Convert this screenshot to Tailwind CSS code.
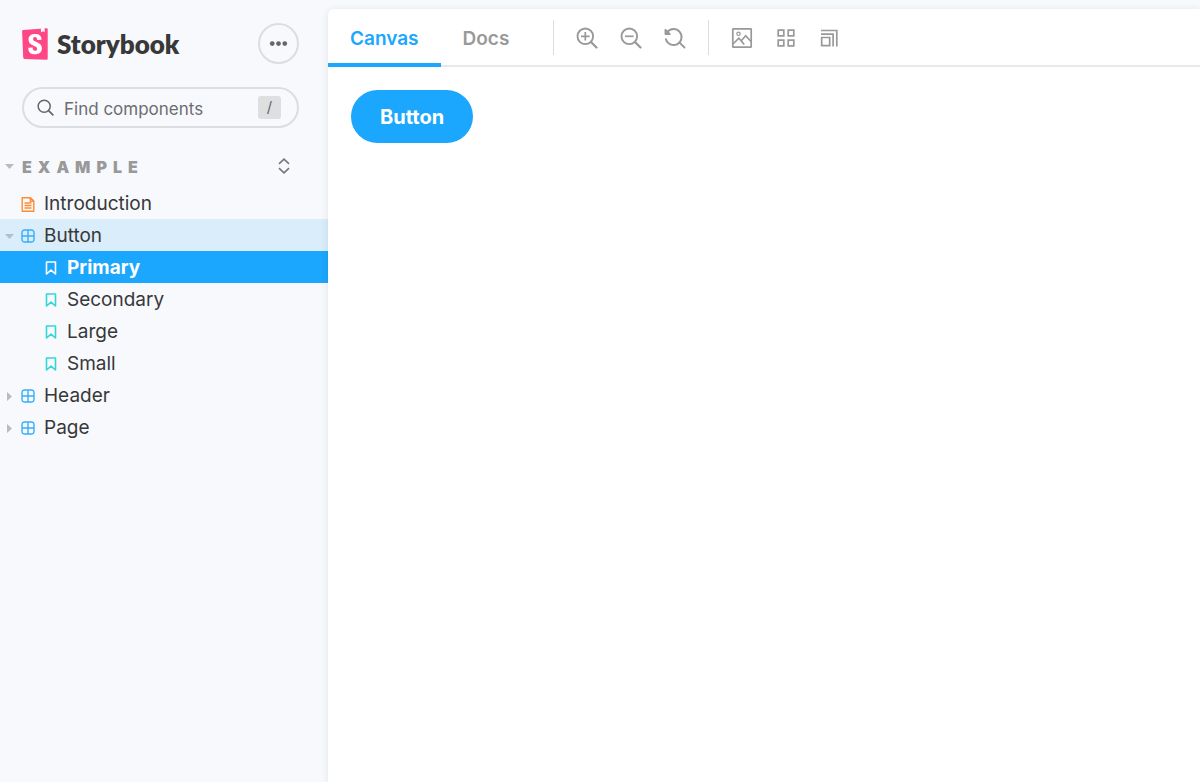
<!DOCTYPE html>
<html lang="en">
<head>
<meta charset="utf-8">
<meta name="viewport" content="width=device-width, initial-scale=1">
<title>Button - Primary · Storybook</title>
<script src="https://cdn.jsdelivr.net/npm/@tailwindcss/browser@4"></script>
</head>
<body class="flex min-h-screen bg-[#f7f9fd] font-['Inter',sans-serif] text-[#383838]">
<svg class="hidden" aria-hidden="true">
  <symbol id="component" viewBox="0 0 14 14"><path d="M3.500 1h7A2.500 2.500 0 0 1 13 3.500v7a2.500 2.500 0 0 1-2.500 2.500h-7A2.500 2.500 0 0 1 1 10.500v-7A2.500 2.500 0 0 1 3.500 1zM7 1v12M1 7h12" fill="none" stroke="currentColor" stroke-width="1.400"/></symbol>
  <symbol id="bookmark" viewBox="0 0 12 14"><path d="M1.500 1h9v12L6 9.200 1.500 13z" fill="none" stroke="currentColor" stroke-width="1.600" stroke-linejoin="round"/></symbol>
  <symbol id="lens" viewBox="0 0 22 22"><circle cx="9.300" cy="9.300" r="7.800" fill="none" stroke="currentColor" stroke-width="1.900"/><path d="M15 15l5.500 5.500" stroke="currentColor" stroke-width="2.200" stroke-linecap="round"/></symbol>
</svg>

<aside class="w-[328px] shrink-0">
  <header class="flex items-center justify-between pt-[23px] pr-[29px] pl-[22px]">
    <a href="#" class="flex items-center gap-2" aria-label="Storybook">
      <svg class="h-8 w-[26px]" viewBox="0 0 26 32" aria-hidden="true">
        <path d="M1.300 2.100L24.500.3a1.100 1.100 0 0 1 1.200 1.100v29.200a1.200 1.200 0 0 1-1.300 1.200L2.500 30.900a1.400 1.400 0 0 1-1.300-1.300L.1 3.500a1.300 1.300 0 0 1 1.200-1.400z" fill="#ff4785"/>
        <path d="M18.900.3l3.600-.3.200 4.300-1.700-1.100-2 1z" fill="#fff"/>
        <path d="M19.500 11.800l-4.400.2c0-2-.7-2.900-2-2.900s-2 .7-2 1.800c0 1.500.9 2 3.500 3.100 3.500 1.500 5.300 3 5.300 6.300 0 3.900-2.600 6-6.900 6-4.500 0-6.900-2.300-6.700-6.600l4.400-.1c0 2.300.8 3.200 2.300 3.200 1.300 0 2.100-.7 2.100-1.900 0-1.500-.9-2.100-3.500-3.100-3.500-1.400-5.100-3.200-5.100-6.200 0-3.700 2.500-5.700 6.700-5.700s6.400 2 6.300 5.900z" fill="#fff"/>
      </svg>
      <span class="pl-px font-['Lato',sans-serif] text-[26px] leading-8 font-extrabold">Storybook</span>
    </a>
    <button type="button" aria-label="Shortcuts" class="flex size-[41px] items-center justify-center rounded-full border-2 border-[#dbdde0] text-[#666]">
      <svg class="h-[19px] w-[19px]" viewBox="0 0 20 20" fill="currentColor"><circle cx="3.400" cy="10" r="2.500"/><circle cx="10" cy="10" r="2.500"/><circle cx="16.600" cy="10" r="2.500"/></svg>
    </button>
  </header>

  <div class="mt-[23px] mr-[29px] ml-[22px] flex h-[41px] items-center rounded-full border-2 border-[#dbdde0] pr-4 pl-[13px]">
    <svg class="size-[17px] shrink-0 text-[#666]"><use href="#lens"/></svg>
    <input type="text" aria-label="Find components" placeholder="Find components" class="ml-2.5 min-w-0 flex-1 bg-transparent pt-1 text-[17px] outline-none placeholder:text-[#6b6d70]">
    <kbd class="flex h-[23px] w-[23px] items-center justify-center rounded-[3px] bg-[#dedfe1] font-['Inter',sans-serif] text-[15px] text-[#666]">/</kbd>
  </div>

  <div class="mt-[22px] flex h-8 items-center justify-between pr-[38px]">
    <button type="button" class="flex items-center pt-0.5 pl-[5px] text-[16px] font-black tracking-[6px] text-[#999]">
      <svg class="mr-2 mb-0.5 h-[5px] w-[9px] text-[#bbb]" viewBox="0 0 9 5"><path d="M0 0h9L4.500 5z" fill="currentColor"/></svg>EXAMPLE
    </button>
    <button type="button" aria-label="Expand all" class="text-[#777]">
      <svg class="h-4 w-3" viewBox="0 0 12 16" fill="none" stroke="currentColor" stroke-width="1.600"><path d="M1 5.800l5-4.600 5 4.600M1 10.200l5 4.600 5-4.600"/></svg>
    </button>
  </div>

  <nav class="mt-[5px] text-[19px] leading-8">
    <a href="#" class="flex h-8 items-center gap-2 pt-0.5 pl-[21px]">
      <svg class="h-[15px] w-3.5 text-[#ff8b33]" viewBox="0 0 14 15" fill="none" stroke="currentColor" stroke-width="1.400"><path d="M1.200.8h8.300l3.300 3.200v10.200H1.200zM9.300.8v3.400h3.500M3.500 6h7M3.500 8.500h7M3.500 11h7" stroke-linejoin="round"/></svg>
      <span class="pl-px">Introduction</span>
    </a>
    <a href="#" class="flex h-8 items-center gap-2 bg-[#daedfb] pt-0.5 pl-[5px]">
      <svg class="-mr-px h-[5px] w-[9px] text-[#b3bfc8]" viewBox="0 0 9 5"><path d="M0 0h9L4.500 5z" fill="currentColor"/></svg>
      <svg class="size-3.5 text-[#37aefa]"><use href="#component"/></svg>
      <span class="pl-px">Button</span>
    </a>
    <a href="#" class="flex h-8 items-center gap-2.5 bg-[#1ba7fd] pt-0.5 pl-[45px] font-bold text-white"><svg class="h-3.5 w-3"><use href="#bookmark"/></svg>Primary</a>
    <a href="#" class="flex h-8 items-center gap-2.5 pt-0.5 pl-[45px]"><svg class="h-3.5 w-3 text-[#37d5d3]"><use href="#bookmark"/></svg>Secondary</a>
    <a href="#" class="flex h-8 items-center gap-2.5 pt-0.5 pl-[45px]"><svg class="h-3.5 w-3 text-[#37d5d3]"><use href="#bookmark"/></svg>Large</a>
    <a href="#" class="flex h-8 items-center gap-2.5 pt-0.5 pl-[45px]"><svg class="h-3.5 w-3 text-[#37d5d3]"><use href="#bookmark"/></svg>Small</a>
    <a href="#" class="flex h-8 items-center gap-2 pt-0.5 pl-[7px]">
      <svg class="mr-px h-[9px] w-[5px] text-[#bbb]" viewBox="0 0 5 9"><path d="M0 0l5 4.500L0 9z" fill="currentColor"/></svg>
      <svg class="size-3.5 text-[#37aefa]"><use href="#component"/></svg>
      <span class="pl-px">Header</span>
    </a>
    <a href="#" class="flex h-8 items-center gap-2 pt-0.5 pl-[7px]">
      <svg class="mr-px h-[9px] w-[5px] text-[#bbb]" viewBox="0 0 5 9"><path d="M0 0l5 4.500L0 9z" fill="currentColor"/></svg>
      <svg class="size-3.5 text-[#37aefa]"><use href="#component"/></svg>
      <span class="pl-px">Page</span>
    </a>
  </nav>
</aside>

<main class="mt-[9px] min-w-0 flex-1 rounded-tl-md bg-white shadow-[0_1px_8px_rgba(0,0,0,0.09)]">
  <div class="flex h-[58px] items-stretch border-b-2 border-[#e9e9e9] text-[19px] font-semibold">
    <button type="button" class="-mb-0.5 border-b-4 border-[#1ba7fd] px-[22px] pt-1.5 text-[#1ba7fd]">Canvas</button>
    <button type="button" class="px-[22px] pt-1 text-[#999]">Docs</button>
    <div class="ml-[22px] flex items-center gap-[22px] text-[#999]">
      <span class="h-[35px] w-px bg-[#ddd]"></span>
      <button type="button" aria-label="Zoom in" class="pt-0.5"><svg class="size-[22px]" viewBox="0 0 22 22"><use href="#lens"/><path d="M5 9.300h8.600M9.300 5v8.600" stroke="currentColor" stroke-width="1.700"/></svg></button>
      <button type="button" aria-label="Zoom out" class="pt-0.5"><svg class="size-[22px]" viewBox="0 0 22 22"><use href="#lens"/><path d="M5 9.300h8.600" stroke="currentColor" stroke-width="1.700"/></svg></button>
      <button type="button" aria-label="Reset zoom" class="pt-0.5"><svg class="size-[22px]" viewBox="0 0 22 22" fill="none" stroke="currentColor" stroke-width="1.900" stroke-linecap="round"><path d="M3.200 5.200A8 8 0 1 1 1.900 12.200M15.300 15.300l5.200 5.200"/><path d="M1.500 2.800v4.300h4.300z" fill="currentColor" stroke-linejoin="round"/></svg></button>
      <span class="h-[35px] w-px bg-[#ddd]"></span>
      <button type="button" aria-label="Change background" class="pt-0.5"><svg class="size-[22px]" viewBox="0 0 22 22" fill="none" stroke="currentColor" stroke-width="1.700"><rect x="1.800" y="1.800" width="18.400" height="18.400" rx=".5"/><circle cx="7.500" cy="6.800" r="1.700" stroke-width="1.200"/><path d="M2 17l5.800-5.800 4.500 5M10 14l4.700-5.300 5.500 6M10.500 14.500l2.800 3"/></svg></button>
      <button type="button" aria-label="Toggle grid" class="pt-0.5"><svg class="size-[22px]" viewBox="0 0 22 22" fill="none" stroke="currentColor" stroke-width="1.700"><path d="M3.200 3.200h5.600v5.600H3.200zM13.200 3.200h5.600v5.600h-5.600zM3.200 13.200h5.600v5.600H3.200zM13.200 13.200h5.600v5.600h-5.600z"/></svg></button>
      <button type="button" aria-label="Change viewport" class="pt-0.5"><svg class="size-[22px]" viewBox="0 0 22 22" fill="none" stroke="currentColor" stroke-width="1.700"><path d="M2.700 10.500h8v8.200h-8zM2 7.200h12.100v12.300M2 3.500h15.800v16"/></svg></button>
    </div>
  </div>
  <div class="p-[23px]">
    <button type="button" class="rounded-full bg-[#1ba7fd] px-[29px] pt-[13px] pb-3 text-[20px] leading-7 font-bold text-white">Button</button>
  </div>
</main>
</body>
</html>
